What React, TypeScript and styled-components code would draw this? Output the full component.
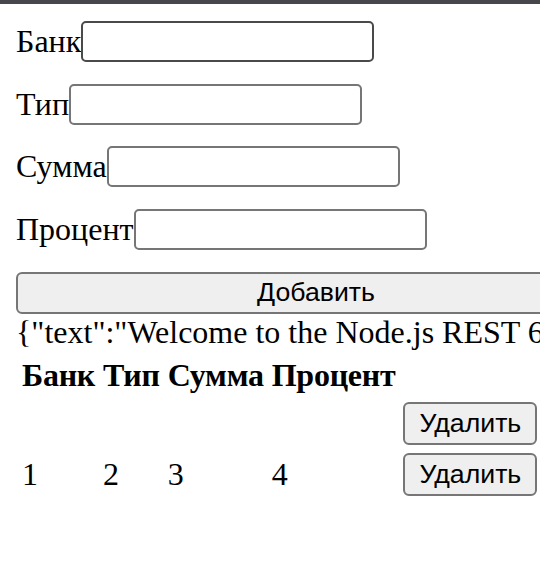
import React from "react";
import styled, { createGlobalStyle } from "styled-components";

const GlobalStyle = createGlobalStyle`
  html, body {
    margin: 0;
    padding: 0;
    background: #ffffff;
  }
  body {
    overflow: hidden;
    font-family: "Liberation Serif", "Times New Roman", serif;
    font-size: 32px;
    color: #000000;
  }
`;

const TopBar = styled.div`
  height: 4px;
  background: #47464c;
`;

const Page = styled.main`
  width: 640px;
  padding: 17px 0 0 16px;
`;

const Form = styled.form`
  display: flex;
  flex-direction: column;
  gap: 21.67px;
  margin: 0;
`;

const Field = styled.label`
  display: flex;
  align-items: center;
  height: 41px;
  white-space: nowrap;
`;

const TextInput = styled.input<{ $active?: boolean }>`
  box-sizing: border-box;
  width: 293px;
  height: 41px;
  margin: 0;
  padding: 2px 4px;
  border: 2px solid ${(p) => (p.$active ? "#4a4a4a" : "#767676")};
  border-radius: 5px;
  background: #ffffff;
  font: 26.67px "Liberation Sans", Arial, sans-serif;
  outline: none;
`;

const ButtonBase = styled.button`
  box-sizing: border-box;
  margin: 0;
  border: 2px solid #767676;
  border-radius: 6px;
  background: #efefef;
  color: #000000;
  font: 26.67px "Liberation Sans", Arial, sans-serif;
  cursor: pointer;
`;

const AddButton = styled(ButtonBase)`
  width: 600px;
  height: 42px;
  padding: 2px 12px;
`;

const DeleteButton = styled(ButtonBase)`
  height: 43px;
  padding: 2px 14px;
`;

const Json = styled.div`
  white-space: nowrap;
  line-height: 37px;
`;

const Table = styled.table`
  border-collapse: separate;
  border-spacing: 4px;
  font-size: 32px;
`;

const Th = styled.th`
  padding: 2px;
  font-weight: bold;
  text-align: left;
  line-height: 37px;
  letter-spacing: -0.25px;
`;

const Td = styled.td`
  padding: 2px;
  vertical-align: middle;
  line-height: 37px;
`;

type Deposit = { bank: string; type: string; sum: string; percent: string };

const rows: Deposit[] = [
  { bank: "", type: "", sum: "", percent: "" },
  { bank: "1", type: "2", sum: "3", percent: "4" },
];

const fields = [
  { label: "Банк", active: true },
  { label: "Тип" },
  { label: "Сумма" },
  { label: "Процент" },
];

export default function App() {
  return (
    <>
      <GlobalStyle />
      <TopBar />
      <Page>
        <Form onSubmit={(e) => e.preventDefault()}>
          {fields.map((f) => (
            <Field key={f.label}>
              {f.label}
              <TextInput type="text" $active={f.active} />
            </Field>
          ))}
          <AddButton type="submit">Добавить</AddButton>
        </Form>
        <Json>{'{"text":"Welcome to the Node.js REST 6 API"}'}</Json>
        <Table>
          <thead>
            <tr>
              <Th>Банк</Th>
              <Th>Тип</Th>
              <Th>Сумма</Th>
              <Th>Процент</Th>
            </tr>
          </thead>
          <tbody>
            {rows.map((r, i) => (
              <tr key={i}>
                <Td>{r.bank}</Td>
                <Td>{r.type}</Td>
                <Td>{r.sum}</Td>
                <Td>{r.percent}</Td>
                <Td>
                  <DeleteButton type="button">Удалить</DeleteButton>
                </Td>
              </tr>
            ))}
          </tbody>
        </Table>
      </Page>
    </>
  );
}
